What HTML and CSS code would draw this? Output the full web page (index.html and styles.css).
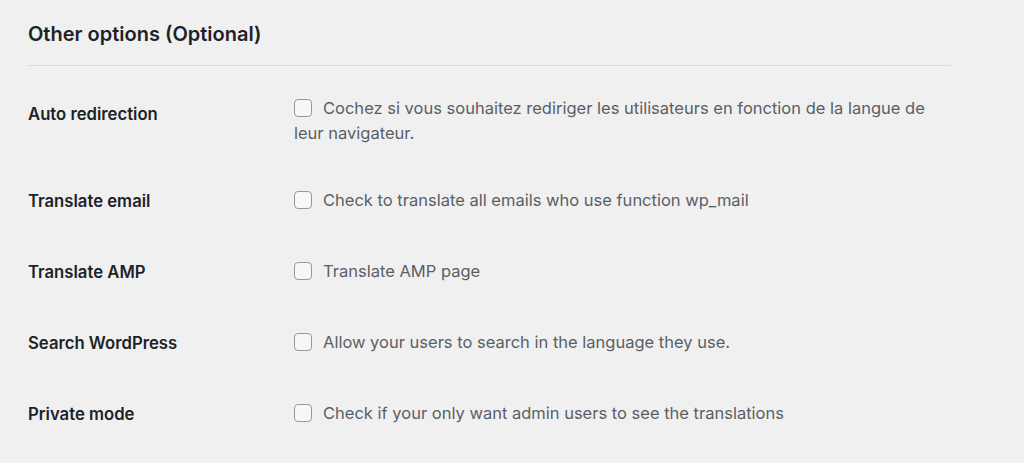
FILE: index.html
```html
<!DOCTYPE html>
<html lang="en">
<head>
<meta charset="utf-8">
<link rel="stylesheet" href="styles.css">
</head>
<body>
<div class="wrap">
  <h2 class="title">Other options (Optional)</h2>
  <div class="table">
    <div class="row">
      <div class="label">Auto redirection</div>
      <div class="field"><label><span class="box"></span>Cochez si vous souhaitez rediriger les utilisateurs en fonction de la langue de leur navigateur.</label></div>
    </div>
    <div class="row">
      <div class="label">Translate email</div>
      <div class="field"><label><span class="box"></span>Check to translate all emails who use function wp_mail</label></div>
    </div>
    <div class="row">
      <div class="label">Translate AMP</div>
      <div class="field"><label><span class="box"></span>Translate AMP page</label></div>
    </div>
    <div class="row">
      <div class="label">Search WordPress</div>
      <div class="field"><label><span class="box"></span>Allow your users to search in the language they use.</label></div>
    </div>
    <div class="row">
      <div class="label">Private mode</div>
      <div class="field"><label><span class="box"></span>Check if your only want admin users to see the translations</label></div>
    </div>
  </div>
</div>
</body>
</html>
```
FILE: styles.css
```css
html, body {
  margin: 0;
  padding: 0;
  background: #f0f0f1;
}
body {
  font-family: "Inter", "Liberation Sans", sans-serif;
  color: #1d2327;
}
.wrap {
  width: 923px;
  margin-left: 28px;
}
.title {
  margin: 0;
  padding: 22px 0 19px;
  font-size: 20px;
  font-weight: 600;
  line-height: 24px;
  border-bottom: 1px solid #dcdcde;
}
.table {
  padding-top: 7px;
}
.row {
  display: flex;
  padding: 23px 0 23px;
}
.row:first-child {
  padding-bottom: 19px;
}
.label {
  width: 266px;
  flex: none;
  font-size: 16.7px;
  font-weight: 600;
  line-height: 20px;
  padding-top: 3px;
  color: #1d2327;
}
.row:first-child .label {
  padding-top: 8px;
}
.field {
  flex: 1;
  font-size: 16.5px;
  line-height: 25px;
  color: #5a5f64;
}
.box {
  display: inline-block;
  width: 18px;
  height: 18px;
  box-sizing: border-box;
  border: 1px solid #95989c;
  border-radius: 4px;
  background: #f6f7f7;
  vertical-align: -3px;
  margin-right: 11px;
}
```
